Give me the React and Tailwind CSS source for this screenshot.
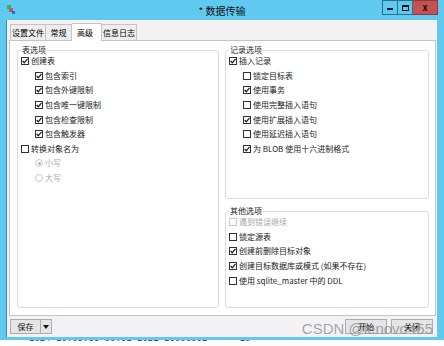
import React from 'react';

const font = { fontFamily: '"Noto Sans CJK SC", "Noto Sans", sans-serif' };

const Check = ({ checked, disabled }) => (
  <span
    className={`w-[8px] h-[8px] shrink-0 flex items-center justify-center border bg-white ${
      disabled ? 'border-[#c8c8c8]' : 'border-[#333]'
    }`}
  >
    {checked && (
      <svg width="6" height="6" viewBox="0 0 6 6">
        <path d="M0.6 3 L2.3 4.8 L5.5 0.8" fill="none" stroke="#222" strokeWidth="1.3" />
      </svg>
    )}
  </span>
);

const Radio = ({ checked }) => (
  <span className="w-[8px] h-[8px] shrink-0 rounded-full border border-[#c8c8c8] bg-white flex items-center justify-center">
    {checked && <span className="w-[3px] h-[3px] rounded-full bg-[#b0b0b0]" />}
  </span>
);

const Row = ({ indent, checked, disabled, radio, children }) => (
  <div className={`flex items-center gap-[2px] h-[14.6px] ${indent ? 'pl-[14px]' : ''}`}>
    {radio ? <Radio checked={checked} /> : <Check checked={checked} disabled={disabled} />}
    <span className={`text-[8px] leading-none whitespace-nowrap ${disabled ? 'text-[#a8a8a8]' : 'text-[#222]'}`}>{children}</span>
  </div>
);

const Group = ({ title, className, children }) => (
  <div className={`relative border border-[#dcdcdc] rounded-[3px] ${className}`}>
    <span className="absolute -top-[5px] left-[3px] bg-white px-[1px] text-[8px] leading-none text-[#222]">{title}</span>
    <div className="pt-[3px] pl-[3px]">{children}</div>
  </div>
);

const Tab = ({ w, children }) => (
  <div className={`${w} shrink-0 h-[16px] border border-b-0 border-l-0 border-[#c4c4c4] bg-[#eeeeee] text-[8px] whitespace-nowrap flex items-center justify-center`}>
    {children}
  </div>
);

export default function App() {
  return (
    <div className="w-[444px] h-[346px] bg-[#60c9ef] flex flex-col overflow-hidden" style={font}>
      {/* title bar */}
      <div className="h-[20px] shrink-0 relative flex items-center justify-center">
        <svg className="absolute left-[7px] top-[5px]" width="9" height="10" viewBox="0 0 9 10">
          <rect x="0" y="0" width="4" height="4" fill="#3cae5a" />
          <rect x="2" y="3" width="4" height="4" fill="#d2467c" />
          <rect x="5" y="6" width="3" height="3" fill="#2a6fc0" />
        </svg>
        <span className="text-[10px] text-[#111]">* 数据传输</span>
        <div className="absolute right-[6px] top-0 flex">
          <div className="w-[16px] h-[15px] border border-[#2b6f8a] flex items-end justify-center pb-[4px]">
            <span className="w-[6px] h-[2px] bg-[#111]" />
          </div>
          <div className="w-[15px] h-[15px] border border-l-0 border-[#2b6f8a] flex items-center justify-center">
            <span className="w-[7px] h-[6px] border border-t-2 border-[#111]" />
          </div>
          <div className="w-[25px] h-[15px] bg-[#c75050] border border-l-0 border-[#8c3a3a] flex items-center justify-center text-[9px] font-bold text-[#111]">
            x
          </div>
        </div>
      </div>

      {/* body */}
      <div className="ml-[6px] mr-[7px] h-[317px] shrink-0 bg-[#f4f1f5] flex flex-col border-l border-[#3a8fb5]">
        {/* tabs */}
        <div className="h-[20px] flex items-end pl-[3px]">
          <div className="w-[36px] shrink-0 h-[16px] border border-b-0 border-[#c4c4c4] bg-[#eeeeee] text-[8px] whitespace-nowrap flex items-center justify-center">设置文件</div>
          <Tab w="w-[26px]">常规</Tab>
          <div className="w-[30px] shrink-0 h-[18px] pl-[5px] border border-b-0 border-l-0 border-[#c4c4c4] bg-white text-[8px] whitespace-nowrap flex items-start pt-[3px] relative top-[1px] z-10">高级</div>
          <Tab w="w-[35px]">信息日志</Tab>
        </div>

        {/* panel */}
        <div className="ml-[2px] mr-[1px] h-[276px] bg-white border border-[#c4c4c4] flex gap-[6px] pl-[7px] pr-[6px] pt-[9px]">
          <Group title="表选项" className="w-[202px] h-[258px]">
            <Row checked>创建表</Row>
            <Row indent checked>包含索引</Row>
            <Row indent checked>包含外键限制</Row>
            <Row indent checked>包含唯一键限制</Row>
            <Row indent checked>包含检查限制</Row>
            <Row indent checked>包含触发器</Row>
            <Row>转换对象名为</Row>
            <Row indent radio checked disabled>小写</Row>
            <Row indent radio disabled>大写</Row>
          </Group>
          <div className="flex-1 flex flex-col gap-[12px]">
            <Group title="记录选项" className="h-[149px]">
              <Row checked>插入记录</Row>
              <Row indent>锁定目标表</Row>
              <Row indent checked>使用事务</Row>
              <Row indent>使用完整插入语句</Row>
              <Row indent checked>使用扩展插入语句</Row>
              <Row indent>使用延迟插入语句</Row>
              <Row indent checked>为 BLOB 使用十六进制格式</Row>
            </Group>
            <Group title="其他选项" className="h-[97px]">
              <Row disabled>遇到错误继续</Row>
              <Row>锁定源表</Row>
              <Row checked>创建前删除目标对象</Row>
              <Row checked>创建目标数据库或模式 (如果不存在)</Row>
              <Row>使用 sqlite_master 中的 DDL</Row>
            </Group>
          </div>
        </div>

        {/* bottom bar */}
        <div className="flex-1 flex items-center justify-between pl-[3px] pr-[4px] relative">
          <div className="flex h-[15px] border border-[#adadad] bg-[#e5e5e5]">
            <span className="w-[29px] text-[8px] flex items-center justify-center text-[#111]">保存</span>
            <span className="w-[11px] border-l border-[#adadad] flex items-center justify-center">
              <svg width="6" height="4" viewBox="0 0 6 4"><path d="M0 0 H6 L3 4 Z" fill="#111" /></svg>
            </span>
          </div>
          <div className="flex gap-[4px]">
            <div className="w-[42px] h-[15px] border border-[#adadad] bg-[#e5e5e5] text-[8px] flex items-center justify-center">开始</div>
            <div className="w-[42px] h-[15px] border border-[#adadad] bg-[#e5e5e5] text-[8px] flex items-center justify-center">关闭</div>
          </div>
          <span
            className="absolute right-[4px] top-[5px] text-[15px] leading-none text-[#8a8a8a]/75"
            style={{ fontFamily: '"Liberation Sans", sans-serif' }}
          >
            CSDN @lenovo455
          </span>
        </div>
      </div>

      {/* bottom border and cut-off strip */}
      <div className="h-[3px] shrink-0" />
      <div className="flex-1 bg-white overflow-hidden relative">
        <span
          className="absolute -top-[7px] left-[2px] text-[9px] text-[#333] whitespace-nowrap"
          style={{ fontFamily: '"Liberation Mono", monospace' }}
        >
          ---- 1024 10:09:36 00:01 2021 10000001 ---- 10 ----
        </span>
      </div>
    </div>
  );
}
